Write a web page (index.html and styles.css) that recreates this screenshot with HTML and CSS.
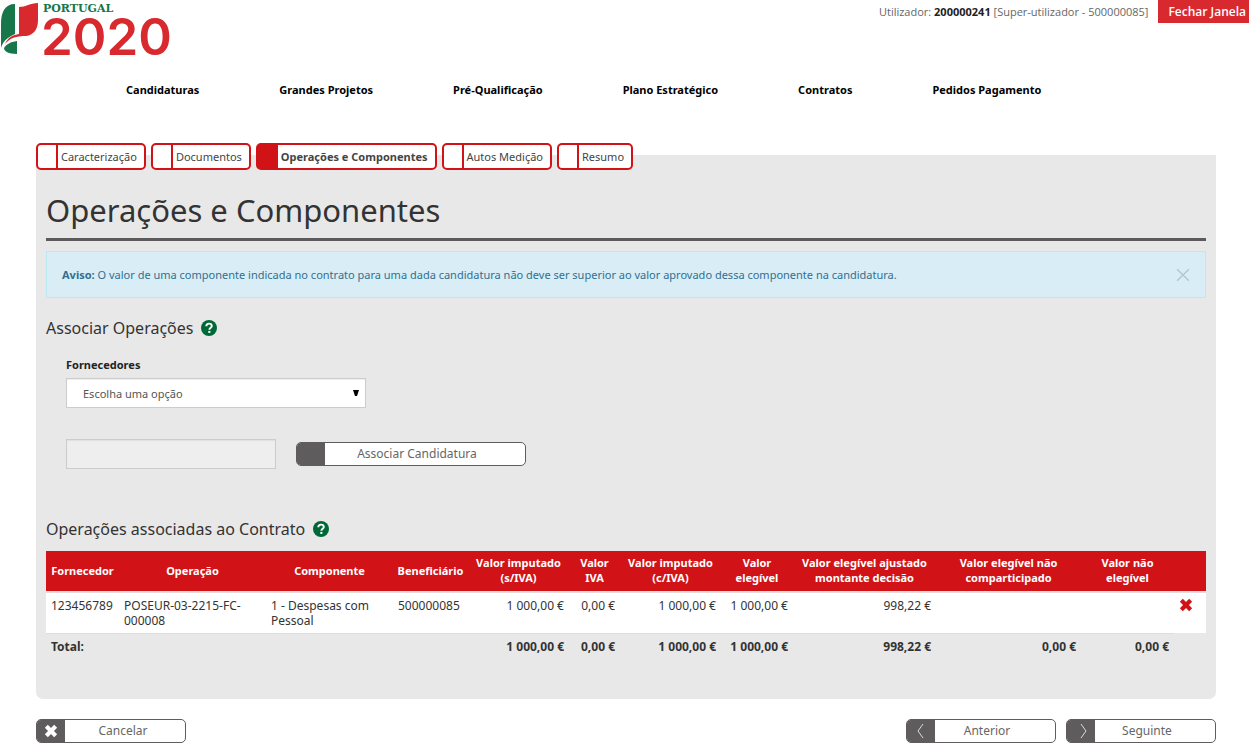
FILE: index.html
```html
<!DOCTYPE html>
<html lang="pt">
<head>
<meta charset="utf-8">
<title>Portugal 2020 - Operações e Componentes</title>
<link rel="stylesheet" href="styles.css">
</head>
<body>
<header class="top">
  <svg class="logo" viewBox="0 0 176 72" role="img" aria-label="Portugal 2020">
    <path fill="#18774a" d="M15 4C5 4 1 12 1 24v24c2-7 7-11 14-14z"/>
    <path fill="#d8292f" d="M19 7C26 7 30 3 38 3v17c0 9-4 15-12 16C16 36 10 38 5 44c3-7 8-9 14-10z"/>
    <path fill="#18774a" d="M17 41v13C8 54 4 51 4 48c3-4 6-6 13-7z"/>
    <text class="logo-name" x="43" y="12">PORTUGAL</text>
    <text class="logo-year" x="41" y="55">2020</text>
  </svg>
  <div class="user">
    <p class="user-text">Utilizador: <strong>200000241</strong> [Super-utilizador - 500000085]</p>
    <button class="close-window" type="button">Fechar Janela</button>
  </div>
</header>
<nav class="menu">
  <a href="#">Candidaturas</a>
  <a href="#">Grandes Projetos</a>
  <a href="#">Pré-Qualificação</a>
  <a href="#">Plano Estratégico</a>
  <a href="#">Contratos</a>
  <a href="#">Pedidos Pagamento</a>
</nav>
<main class="page">
  <nav class="tabs">
    <a class="tab" href="#">Caracterização</a>
    <a class="tab" href="#">Documentos</a>
    <a class="tab tab-active" href="#">Operações e Componentes</a>
    <a class="tab" href="#">Autos Medição</a>
    <a class="tab" href="#">Resumo</a>
  </nav>
  <section class="panel">
    <h1>Operações e Componentes</h1>
    <div class="notice">
      <p><strong>Aviso:</strong> O valor de uma componente indicada no contrato para uma dada candidatura não deve ser superior ao valor aprovado dessa componente na candidatura.</p>
      <button class="dismiss" type="button" aria-label="Fechar aviso"><svg viewBox="0 0 12 12"><path d="M1 1l10 10M11 1L1 11" fill="none" stroke="#b3c6cf" stroke-width="1.2"/></svg></button>
    </div>
    <h2>Associar Operações
      <svg class="help" viewBox="0 0 16 16"><circle cx="8" cy="8" r="8" fill="#006837"/><path d="M5.3 6.2C5.3 4.400 6.500 3.600 8 3.600s2.800.9 2.800 2.400c0 1.800-2.400 1.900-2.400 3.700" fill="none" stroke="#fff" stroke-width="1.900"/><path d="M7.300 10.900h2.100v2H7.300z" fill="#fff"/></svg>
    </h2>
    <form class="assoc">
      <label for="supplier">Fornecedores</label>
      <div class="select-wrap">
        <select id="supplier"><option>Escolha uma opção</option></select>
        <svg class="arrow" viewBox="0 0 6 6"><path d="M0 0h6L4 6H2z"/></svg>
      </div>
      <div class="assoc-row">
        <input type="text" aria-label="Candidatura" disabled>
        <button class="btn btn-wide" type="button"><span class="btn-icon"></span><span class="btn-text">Associar Candidatura</span></button>
      </div>
    </form>
    <h2>Operações associadas ao Contrato
      <svg class="help" viewBox="0 0 16 16"><circle cx="8" cy="8" r="8" fill="#006837"/><path d="M5.3 6.2C5.3 4.400 6.500 3.600 8 3.600s2.800.9 2.800 2.400c0 1.800-2.400 1.900-2.400 3.700" fill="none" stroke="#fff" stroke-width="1.900"/><path d="M7.300 10.900h2.100v2H7.300z" fill="#fff"/></svg>
    </h2>
    <table>
      <colgroup><col class="c-supplier"><col class="c-operation"><col class="c-component"><col class="c-beneficiary"><col class="c-imputed"><col class="c-vat"><col class="c-imputed"><col class="c-eligible"><col class="c-adjusted"><col class="c-unshared"><col class="c-ineligible"><col class="c-action"></colgroup>
      <thead><tr><th>Fornecedor</th><th>Operação</th><th>Componente</th><th>Beneficiário</th><th>Valor imputado<br>(s/IVA)</th><th>Valor<br>IVA</th><th>Valor imputado<br>(c/IVA)</th><th>Valor<br>elegível</th><th>Valor elegível ajustado<br>montante decisão</th><th>Valor elegível não<br>comparticipado</th><th>Valor não<br>elegível</th><td></td></tr></thead>
      <tbody><tr><td>123456789</td><td>POSEUR-03-2215-FC-<br>000008</td><td>1 - Despesas com<br>Pessoal</td><td>500000085</td><td class="num">1 000,00 €</td><td class="num">0,00 €</td><td class="num">1 000,00 €</td><td class="num">1 000,00 €</td><td class="num">998,22 €</td><td></td><td></td><td><button class="remove" type="button" aria-label="Remover"><svg viewBox="0 0 12 12"><path d="M2 2l8 8M10 2l-8 8" fill="none" stroke="#d11317" stroke-width="3.600"/></svg></button></td></tr></tbody>
      <tfoot><tr><td>Total:</td><td></td><td></td><td></td><td class="num">1 000,00 €</td><td class="num">0,00 €</td><td class="num">1 000,00 €</td><td class="num">1 000,00 €</td><td class="num">998,22 €</td><td class="num">0,00 €</td><td class="num">0,00 €</td><td class="blank"></td></tr></tfoot>
    </table>
  </section>
  <footer class="actions">
    <button class="btn btn-cancel" type="button"><span class="btn-icon"><svg viewBox="0 0 12 12"><path d="M2 2l8 8M10 2l-8 8" fill="none" stroke="#fff" stroke-width="3.600"/></svg></span><span class="btn-text">Cancelar</span></button>
    <button class="btn" type="button"><span class="btn-icon"><svg viewBox="0 0 14 14"><path d="M9 0L4 7l5 7" fill="none" stroke="#ddd"/></svg></span><span class="btn-text">Anterior</span></button>
    <button class="btn" type="button"><span class="btn-icon"><svg viewBox="0 0 14 14"><path d="M7 0l5 7-5 7" fill="none" stroke="#ddd"/></svg></span><span class="btn-text">Seguinte</span></button>
  </footer>
</main>
</body>
</html>
```
FILE: styles.css
```css
* { box-sizing: border-box; }
body { margin: 0; background: #fff; color: #333; font: 11px/15px "Noto Sans", "Open Sans", sans-serif; }
p, h1, h2 { margin: 0; }
button, input, select { font: inherit; color: inherit; }
button { cursor: pointer; }
a { color: inherit; text-decoration: none; }

.top { display: flex; justify-content: space-between; align-items: flex-start; height: 72px; }
.logo { width: 176px; height: 72px; overflow: visible; }
.logo-name { font: bold 11px "DejaVu Serif", serif; fill: #18774a; }
.logo-year { font: 600 51px Inter, sans-serif; fill: #d8292f; }
.user { display: flex; align-items: center; gap: 10px; font-family: "Open Sans", sans-serif; color: #666; }
.user-text strong { color: #222; }
.close-window { height: 23px; padding: 0 3px 0 10px; border: 0; background: #d8292f; color: #fff; font: 600 12px/23px "Open Sans", sans-serif; white-space: nowrap; }

.menu { display: flex; gap: 80px; padding: 10px 0 0 126px; color: #000; font-weight: bold; white-space: nowrap; }

.page { padding: 46px 33px 0 36px; }
.tabs { display: flex; gap: 5px; position: relative; z-index: 1; margin-bottom: -15px; }
.tab { height: 27px; padding: 0 7px 0 0; display: flex; align-items: center; border: 2px solid #d11317; border-radius: 5px; background: #fff; color: #444; line-height: 22px; white-space: nowrap; }
.tab::before { content: ""; width: 18px; height: 23px; margin-right: 3px; border-right: 2px solid #d11317; }
.tab-active { font-weight: bold; }
.tab-active::before { background: #d11317; }

.panel { padding: 33px 10px 39px; border-radius: 0 0 7px 7px; background: #e8e8e8; }
h1 { padding: 0 0 5px; border-bottom: 3px solid #5c5a5b; font-size: 31px; line-height: 45px; font-weight: normal; }
.notice { display: flex; justify-content: space-between; align-items: center; margin: 10px 0 18px; min-height: 47px; padding: 0 15px; border: 1px solid #bce8f1; background: #d9edf7; color: #31708f; }
.dismiss { padding: 0; border: 0; background: none; }
.dismiss svg { display: block; width: 14px; height: 14px; }
h2 { display: flex; align-items: center; gap: 8px; font-size: 16px; line-height: 24px; font-weight: normal; }
.help { width: 16px; height: 16px; }
.assoc { padding: 17px 20px 0; margin-bottom: 48px; }
.assoc label { display: block; margin-bottom: 6px; color: #222; font-weight: bold; }
.select-wrap { position: relative; width: 300px; max-width: 100%; }
select { display: block; width: 100%; height: 30px; padding: 0 16px; border: 1px solid #ccc; border-radius: 0; background: #fff; box-shadow: inset 0 1px 1px #eee; color: #555; appearance: none; }
.arrow { position: absolute; right: 7px; top: 12px; width: 6px; height: 6px; pointer-events: none; }
.assoc-row { display: flex; align-items: center; gap: 20px; margin-top: 31px; }
input { width: 210px; height: 30px; border: 1px solid #ccc; background: #eee; box-shadow: inset 0 1px 1px #e0e0e0; }

.btn { display: flex; width: 150px; height: 24px; padding: 0; overflow: hidden; border: 1px solid #5e5c5d; border-radius: 5px; background: #fff; color: #666; font-size: 12px; line-height: 22px; }
.btn-wide { width: 230px; }
.btn-icon { display: flex; align-items: center; justify-content: center; width: 28px; height: 22px; background: #5e5c5d; }
.btn-icon svg { width: 14px; height: 14px; }
.btn-text { flex: 1; padding-right: 16px; text-align: center; }

table { width: 100%; margin-top: 10px; border-collapse: separate; border-spacing: 0; table-layout: fixed; }
.c-supplier { width: 73px; }
.c-operation { width: 147px; }
.c-component { width: 127px; }
.c-beneficiary { width: 75px; }
.c-imputed { width: 101px; }
.c-vat { width: 51px; }
.c-eligible { width: 72px; }
.c-adjusted { width: 143px; }
.c-unshared { width: 145px; }
.c-ineligible { width: 93px; }
.c-action { width: 32px; }
th, td { padding: 5px; text-align: left; vertical-align: top; white-space: nowrap; }
thead th, thead td { height: 42px; padding: 4px 0 6px; border-bottom: 2px solid #ddd; background: #d11317; color: #fff; text-align: center; vertical-align: middle; }
tbody td, tfoot td { font-size: 12px; }
tbody td { height: 40px; background: #fff; }
tfoot td { height: 27px; border-top: 1px solid #ddd; font-weight: bold; }
tfoot .blank { border-top-color: transparent; }
.num { text-align: right; }
.remove { display: block; padding: 0; border: 0; background: none; }
.remove svg { display: block; width: 14px; height: 14px; }

.actions { display: flex; gap: 10px; padding: 20px 0 8px; }
.btn-cancel { margin-right: auto; }
.btn-cancel .btn-text { padding-right: 4px; }
```
